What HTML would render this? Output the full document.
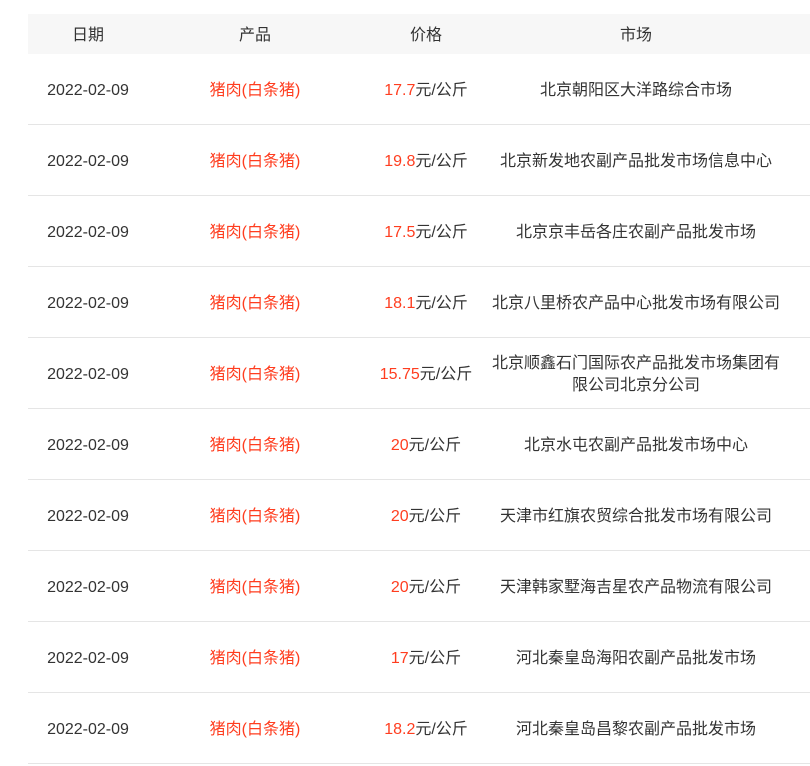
<!DOCTYPE html>
<html><head><meta charset="utf-8"><style>
body{margin:0;background:#fff;width:810px;height:766px;overflow:hidden;font-family:"Liberation Sans","Noto Sans CJK SC",sans-serif;font-size:16px;color:#333}
.hd{position:absolute;left:28px;top:14px;width:782px;height:40px;background:#f7f7f7}
.c{position:absolute;text-align:center;white-space:nowrap;line-height:22px}
.line{position:absolute;left:28px;width:782px;height:1px;background:#e5e5e5}
.r{color:#ff3d1f}
</style></head><body>
<div class="hd"></div>
<div class="c" style="left:28px;width:120px;top:25px">日期</div>
<div class="c" style="left:148px;width:214px;top:25px">产品</div>
<div class="c" style="left:362px;width:128px;top:25px">价格</div>
<div class="c" style="left:490px;width:292px;top:25px">市场</div>
<div id="rows"></div>
<script>
var d=[["17.7","北京朝阳区大洋路综合市场"],["19.8","北京新发地农副产品批发市场信息中心"],["17.5","北京京丰岳各庄农副产品批发市场"],["18.1","北京八里桥农产品中心批发市场有限公司"],["15.75","北京顺鑫石门国际农产品批发市场集团有<br>限公司北京分公司"],["20","北京水屯农副产品批发市场中心"],["20","天津市红旗农贸综合批发市场有限公司"],["20","天津韩家墅海吉星农产品物流有限公司"],["17","河北秦皇岛海阳农副产品批发市场"],["18.2","河北秦皇岛昌黎农副产品批发市场"]];
var h="";
d.forEach(function(x,i){var cy=91+i*71;var t=cy-11;var mt=x[1].indexOf("<br>")>0?cy-22:t;
h+='<div class="c" style="left:28px;width:120px;top:'+t+'px">2022-02-09</div>';
h+='<div class="c r" style="left:148px;width:214px;top:'+t+'px">猪肉(白条猪)</div>';
h+='<div class="c" style="left:362px;width:128px;top:'+t+'px"><span class="r">'+x[0]+'</span>元/公斤</div>';
h+='<div class="c" style="left:490px;width:292px;top:'+mt+'px">'+x[1]+'</div>';
h+='<div class="line" style="top:'+(124+i*71)+'px"></div>';});
document.getElementById("rows").innerHTML=h;
</script>
</body></html>
